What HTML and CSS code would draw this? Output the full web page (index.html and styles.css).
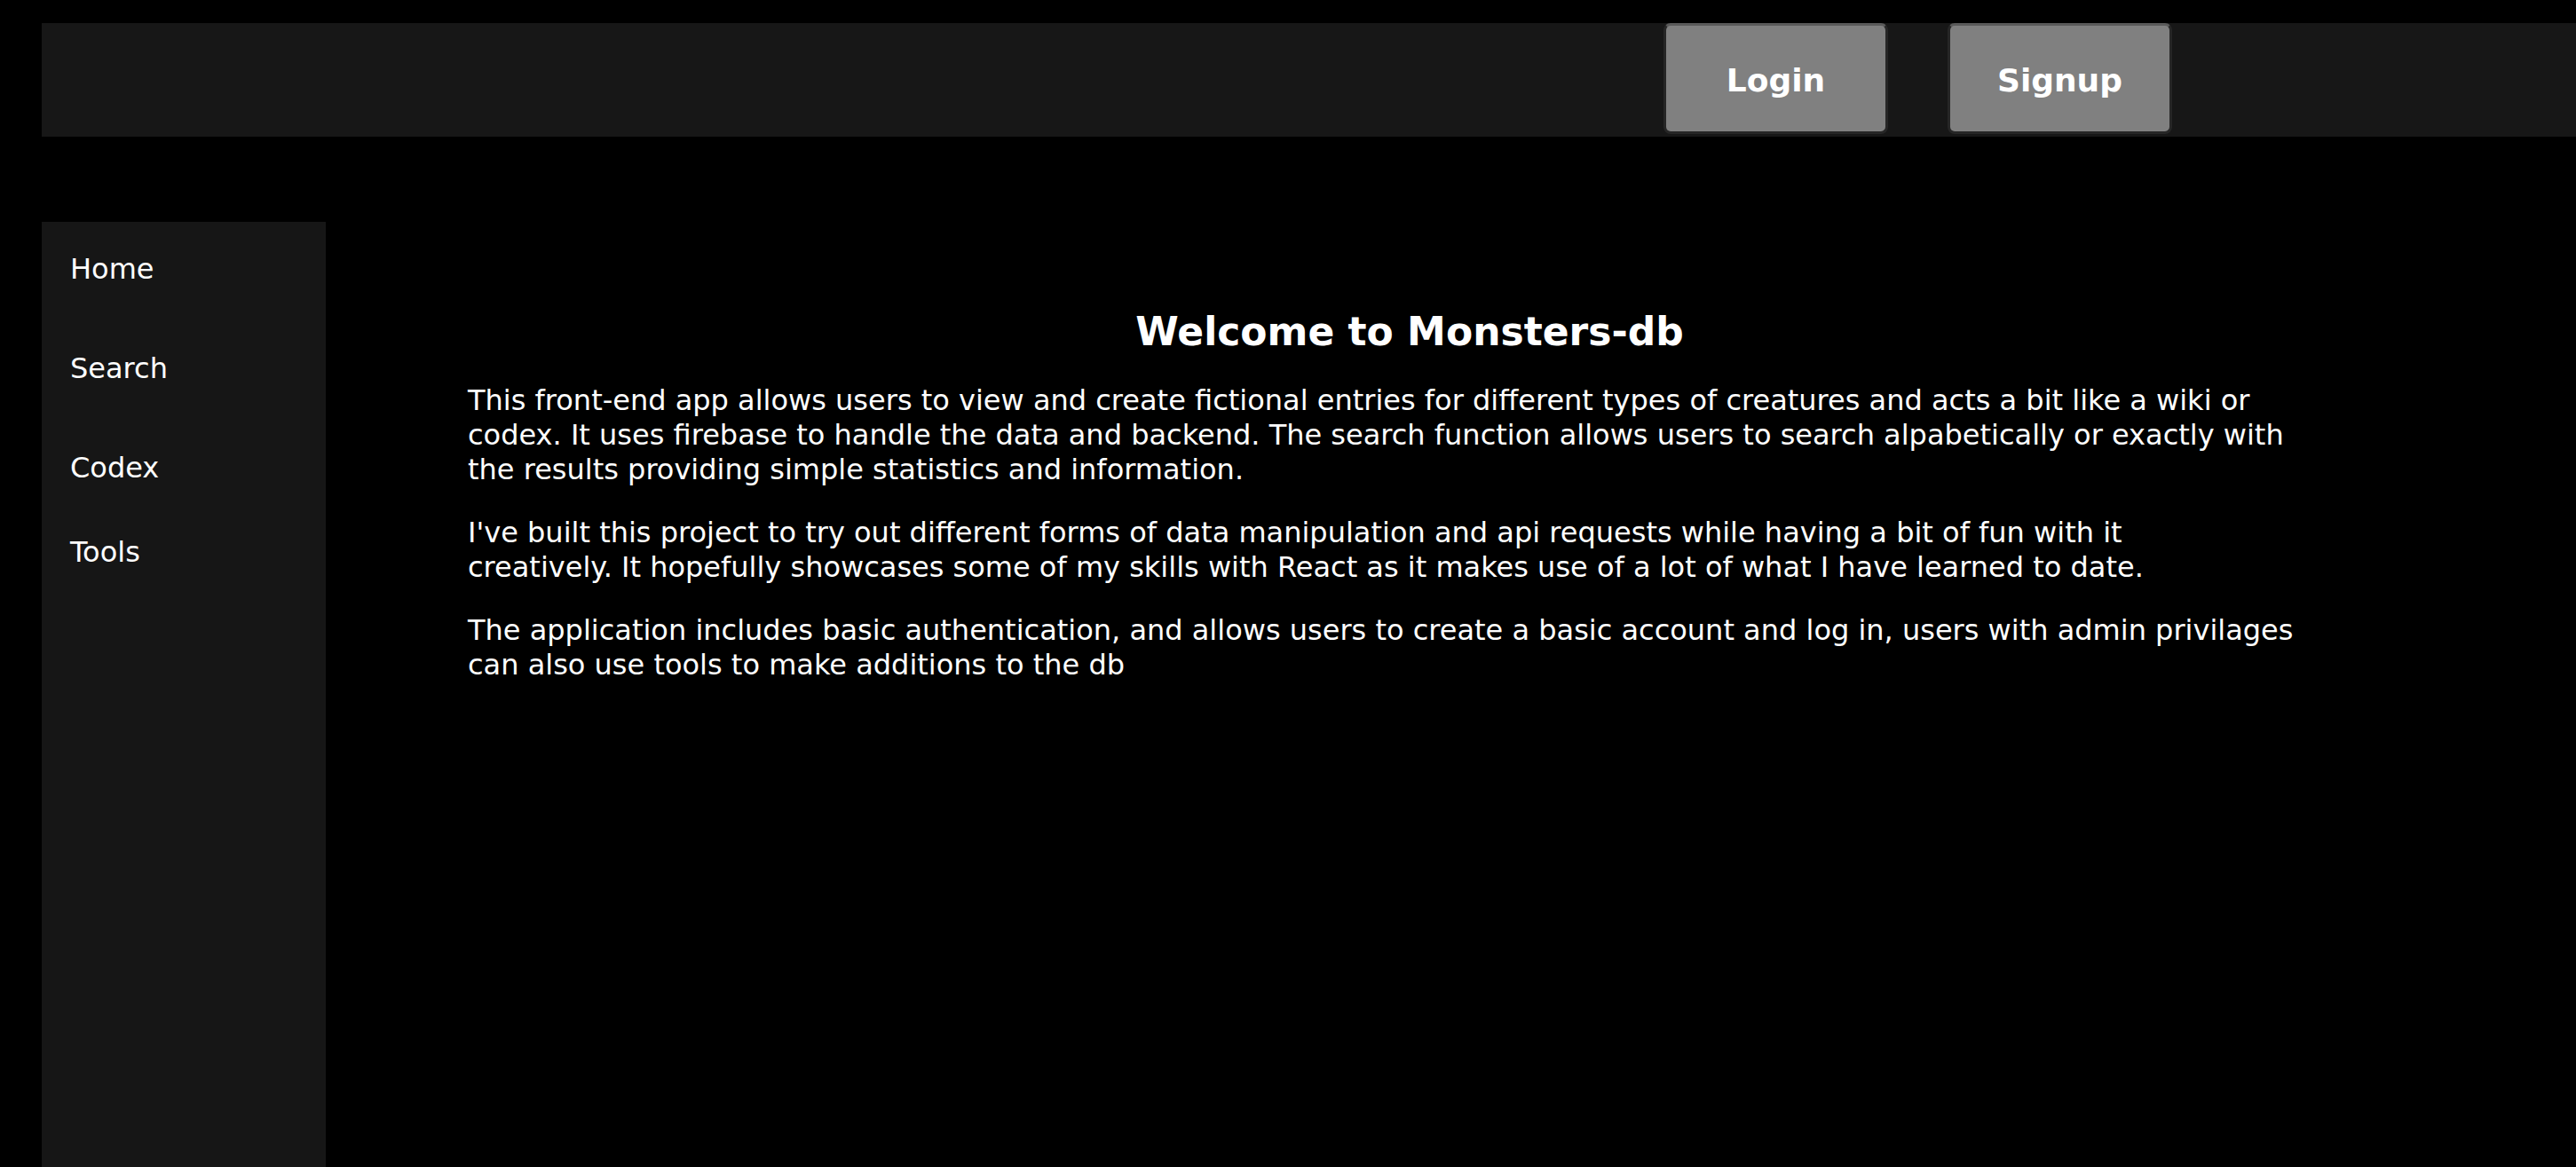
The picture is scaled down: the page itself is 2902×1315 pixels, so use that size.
FILE: index.html
```html
<!DOCTYPE html>
<html lang="en">
<head>
<meta charset="utf-8">
<title>Monsters-db</title>
<link rel="stylesheet" href="styles.css">
</head>
<body>
<header class="topbar">
  <button class="auth-btn">Login</button>
  <button class="auth-btn">Signup</button>
</header>
<div class="layout">
  <nav class="sidebar">
    <a class="nav-link" href="#">Home</a>
    <a class="nav-link" href="#">Search</a>
    <a class="nav-link" href="#">Codex</a>
    <a class="nav-link nav-link-tools" href="#">Tools</a>
  </nav>
  <main class="content">
    <h2 class="title">Welcome to Monsters-db</h2>
    <p class="text">This front-end app allows users to view and create fictional entries for different types of creatures and acts a bit like a wiki or codex. It uses firebase to handle the data and backend. The search function allows users to search alpabetically or exactly with the results providing simple statistics and information.</p>
    <p class="text">I've built this project to try out different forms of data manipulation and api requests while having a bit of fun with it<br>creatively. It hopefully showcases some of my skills with React as it makes use of a lot of what I have learned to date.</p>
    <p class="text">The application includes basic authentication, and allows users to create a basic account and log in, users with admin privilages can also use tools to make additions to the db</p>
  </main>
</div>
</body>
</html>
```
FILE: styles.css
```css
html, body {
  margin: 0;
  padding: 0;
  background: #000;
}
body {
  padding: 26px 0 0 47px;
  font-family: "DejaVu Sans", Verdana, sans-serif;
  color: #fff;
  overflow: hidden;
  height: 100vh;
  box-sizing: border-box;
}
.topbar {
  height: 128px;
  background: #171717;
  display: flex;
  justify-content: flex-end;
  align-items: flex-start;
  gap: 67px;
  padding-right: 455px;
}
.auth-btn {
  width: 253px;
  height: 125px;
  box-sizing: border-box;
  background: #808080;
  border: 3px solid #262626;
  border-top-color: #5a5a5a;
  border-radius: 8px;
  color: #fff;
  font-family: "DejaVu Sans", Verdana, sans-serif;
  font-weight: bold;
  font-size: 36px;
  padding: 3px 0 0;
  cursor: pointer;
}
.layout {
  display: flex;
  margin-top: 96px;
  height: calc(100vh - 250px);
}
.sidebar {
  width: 320px;
  flex: none;
  background: #161616;
  padding: 34px 0 0 32px;
  box-sizing: border-box;
  display: flex;
  flex-direction: column;
  align-items: flex-start;
}
.nav-link {
  color: #fff;
  text-decoration: none;
  font-size: 32px;
  line-height: 38px;
  margin-bottom: 74px;
}
.nav-link-tools {
  margin-top: -17px;
}
.content {
  padding: 98px 0 0 160px;
  width: 2122px;
}
.title {
  margin: 0 0 32px;
  font-size: 44px;
  line-height: 52px;
  font-weight: bold;
  text-align: center;
}
.text {
  margin: 0 64px 32px 0;
  font-size: 32px;
  line-height: 39px;
}
```
